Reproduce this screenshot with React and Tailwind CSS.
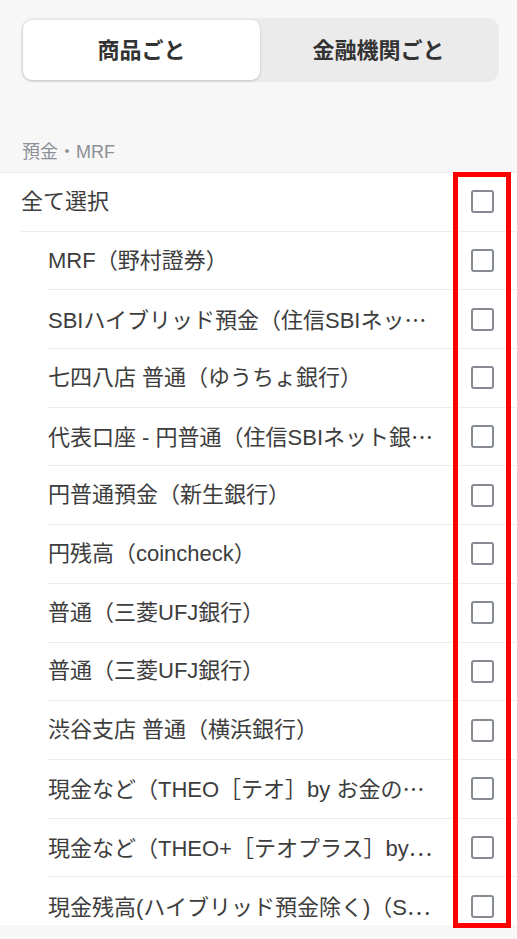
import React from "react";

const items = [
  "MRF（野村證券）",
  "SBIハイブリッド預金（住信SBIネッ…",
  "七四八店 普通（ゆうちょ銀行）",
  "代表口座 - 円普通（住信SBIネット銀…",
  "円普通預金（新生銀行）",
  "円残高（coincheck）",
  "普通（三菱UFJ銀行）",
  "普通（三菱UFJ銀行）",
  "渋谷支店 普通（横浜銀行）",
  "現金など（THEO［テオ］by お金の…",
  "現金など（THEO+［テオプラス］by…",
  "現金残高(ハイブリッド預金除く)（S…",
];

function Checkbox() {
  return (
    <div className="w-[23px] h-[23px] shrink-0 rounded-[3px] border-2 border-[#868a93] bg-white" />
  );
}

function Label({ text }) {
  if (text.endsWith("…")) {
    return (
      <>
        {text.slice(0, -1)}
        <span style={{ fontFamily: '"Noto Sans CJK JP", sans-serif' }}>…</span>
      </>
    );
  }
  return <>{text}</>;
}

function Row({ label, indent, last }) {
  return (
    <div
      className={`flex shrink-0 items-center h-[58.7px] pr-[23px] ${indent ? "ml-[48px]" : "ml-[21px]"} ${
        last ? "" : "border-b border-[#ededed]"
      }`}
    >
      <div className="flex-1 min-w-0 truncate text-[22px] leading-[30px] text-[#3d3d3d]">
        <Label text={label} />
      </div>
      <div className="ml-[20px]">
        <Checkbox />
      </div>
    </div>
  );
}

export default function App() {
  return (
    <div
      className="relative flex flex-col w-[517px] h-[939px] bg-[#f7f7f7] overflow-hidden"
      style={{ fontFamily: '"Liberation Sans", "Noto Sans CJK JP", sans-serif' }}
    >
      <div className="pt-[18px] pl-[21px] pr-[18px] shrink-0">
        <div className="flex h-[64px] p-[2px] rounded-[12px] bg-[#ebebeb]">
          <div className="flex-1 flex items-center justify-center rounded-[9px] bg-white shadow-[0_1px_3px_rgba(0,0,0,0.18)] text-[22px] font-bold text-[#333333]">
            商品ごと
          </div>
          <div className="flex-1 flex items-center justify-center text-[22px] font-bold text-[#333333]">
            金融機関ごと
          </div>
        </div>
      </div>
      <div className="shrink-0 pt-[58px] pb-[8px] pl-[22px] text-[18px] leading-[24px] text-[#8c9097]">
        預金・MRF
      </div>
      <div className="flex-1 min-h-0 overflow-hidden flex flex-col bg-white border-t border-[#efefef]">
        <Row label="全て選択" indent={false} />
        {items.map((t, i) => (
          <Row key={i} label={t} indent last={i === items.length - 1} />
        ))}
      </div>
      <div className="shrink-0 h-[14px] bg-[#f7f7f7]" />
      <div className="absolute left-[453px] top-[172px] w-[58px] h-[756px] border-[5px] border-[#ff0000] pointer-events-none" />
    </div>
  );
}
